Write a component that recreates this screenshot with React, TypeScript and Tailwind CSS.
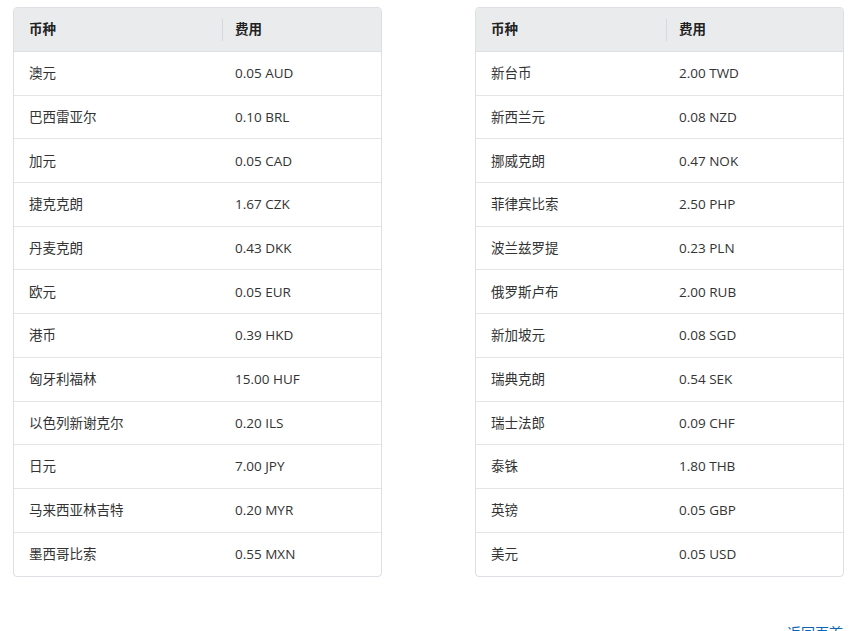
const left: [string, string][] = [
  ["澳元", "0.05 AUD"], ["巴西雷亚尔", "0.10 BRL"], ["加元", "0.05 CAD"], ["捷克克朗", "1.67 CZK"],
  ["丹麦克朗", "0.43 DKK"], ["欧元", "0.05 EUR"], ["港币", "0.39 HKD"], ["匈牙利福林", "15.00 HUF"],
  ["以色列新谢克尔", "0.20 ILS"], ["日元", "7.00 JPY"], ["马来西亚林吉特", "0.20 MYR"], ["墨西哥比索", "0.55 MXN"],
];
const right: [string, string][] = [
  ["新台币", "2.00 TWD"], ["新西兰元", "0.08 NZD"], ["挪威克朗", "0.47 NOK"], ["菲律宾比索", "2.50 PHP"],
  ["波兰兹罗提", "0.23 PLN"], ["俄罗斯卢布", "2.00 RUB"], ["新加坡元", "0.08 SGD"], ["瑞典克朗", "0.54 SEK"],
  ["瑞士法郎", "0.09 CHF"], ["泰铢", "1.80 THB"], ["英镑", "0.05 GBP"], ["美元", "0.05 USD"],
];

function Table({ rows, col }: { rows: [string, string][]; col: string }) {
  return (
    <div className="w-[369px] rounded border border-[#dcdfe3] overflow-hidden bg-white">
      <div className="flex h-[44px] items-center bg-[#e9ebed] border-b border-[#dcdfe3] font-bold text-[#222]">
        <div className={`${col} pl-[15px] border-r border-[#d6d9dc] h-[22px] flex items-center`}>币种</div>
        <div className="pl-[12px]">费用</div>
      </div>
      {rows.map(([a, b], i) => (
        <div key={i} className={`flex h-[43.7px] items-center text-[#333] ${i < rows.length - 1 ? "border-b border-[#e3e5e8]" : ""}`}>
          <div className={`${col} pl-[15px]`}>{a}</div>
          <div className="pl-[12px]">{b}</div>
        </div>
      ))}
    </div>
  );
}

export default function App() {
  return (
    <div className="relative h-[631px] w-[862px] overflow-hidden bg-white text-[13.5px]" style={{ fontFamily: '"Open Sans", "Noto Sans CJK SC", sans-serif' }}>
      <div className="flex gap-[93px] pl-[13px] pt-[7px]">
        <Table rows={left} col="w-[209px]" />
        <Table rows={right} col="w-[191px]" />
      </div>
      <div className="absolute left-[787px] top-[622px] text-[14px] text-[#0e64b4]">返回页首</div>
    </div>
  );
}
